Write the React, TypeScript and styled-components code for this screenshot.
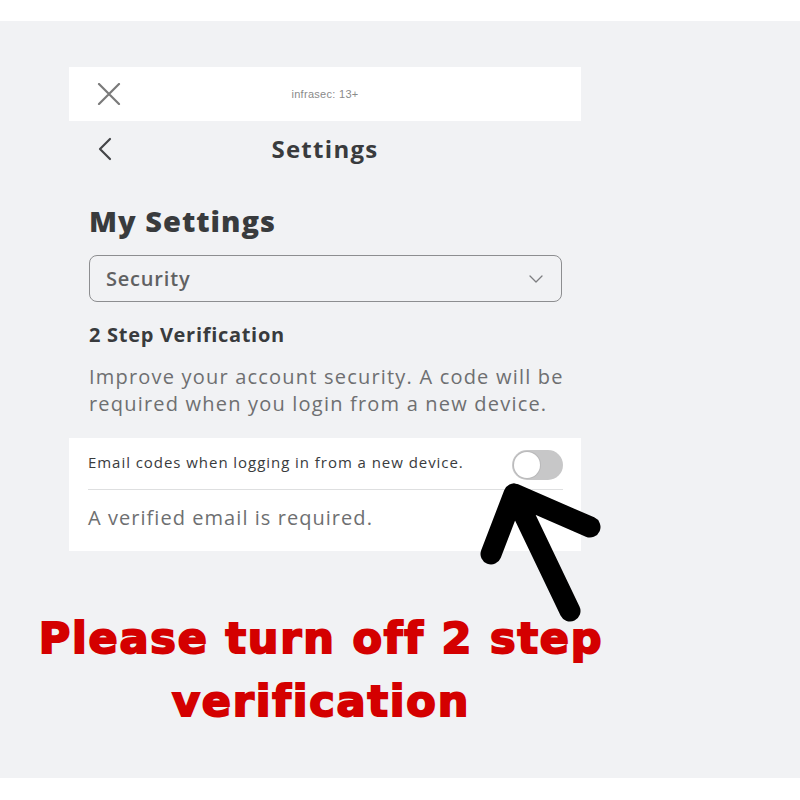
import React from "react";
import styled, { createGlobalStyle } from "styled-components";

const GlobalStyle = createGlobalStyle`
  html, body {
    margin: 0;
    padding: 0;
    background: #ffffff;
  }
  body {
    font-family: "Open Sans", "Liberation Sans", sans-serif;
  }
`;

const Page = styled.div({
  width: "800px",
  height: "800px",
  background: "#ffffff",
  paddingTop: "21px",
  boxSizing: "border-box",
  overflow: "hidden",
});

const Stage = styled.div({
  position: "relative",
  height: "757px",
  background: "#f1f2f4",
  paddingTop: "46px",
  boxSizing: "border-box",
});

const Panel = styled.div({
  marginLeft: "69px",
  width: "512px",
  display: "flex",
  flexDirection: "column",
});

const TopBar = styled.div({
  height: "54px",
  background: "#ffffff",
  display: "grid",
  gridTemplateColumns: "1fr auto 1fr",
  alignItems: "center",
  padding: "0 28px",
});

const Badge = styled.div({
  fontSize: "11px",
  color: "#8a8a8a",
  fontFamily: "'Liberation Sans Narrow', 'Liberation Sans', sans-serif",
  letterSpacing: "0.3px",
});

const Header = styled.div({
  height: "55px",
  display: "grid",
  gridTemplateColumns: "1fr auto 1fr",
  alignItems: "center",
  padding: "0 28px",
});

const HeaderTitle = styled.div({
  fontSize: "24px",
  fontWeight: 700,
  color: "#393b3d",
  lineHeight: "24px",
  letterSpacing: "1.3px",
});

const Body = styled.div({
  display: "flex",
  flexDirection: "column",
  padding: "0 19px 0 20px",
});

const PageTitle = styled.h1({
  margin: "30px 0 0 0",
  fontSize: "29px",
  lineHeight: "29px",
  fontWeight: 800,
  color: "#393b3d",
  letterSpacing: "1px",
});

const Select = styled.div({
  marginTop: "20px",
  height: "47px",
  border: "1.5px solid #8d8e90",
  borderRadius: "8px",
  boxSizing: "border-box",
  display: "flex",
  alignItems: "center",
  justifyContent: "space-between",
  padding: "0 18px 0 16px",
  fontSize: "20px",
  color: "#606162",
  fontWeight: 600,
  letterSpacing: "0.8px",
});

const SectionTitle = styled.h2({
  margin: "23px 0 0 0",
  fontSize: "20px",
  lineHeight: "20px",
  fontWeight: 700,
  color: "#393b3d",
  letterSpacing: "0.7px",
});

const Description = styled.p({
  margin: "18px 0 0 0",
  fontSize: "20px",
  lineHeight: "27px",
  color: "#6e6f71",
  letterSpacing: "1.2px",
  whiteSpace: "nowrap",
});

const Card = styled.div({
  marginTop: "21px",
  background: "#ffffff",
  padding: "0 18px 20px 19px",
  display: "flex",
  flexDirection: "column",
});

const SettingRow = styled.div({
  display: "flex",
  justifyContent: "space-between",
  alignItems: "flex-start",
  padding: "12px 0 9px 0",
  borderBottom: "1px solid #dedfe0",
});

const SettingLabel = styled.div({
  marginTop: "3px",
  fontSize: "15px",
  lineHeight: "18px",
  color: "#393b3d",
  letterSpacing: "0.95px",
});

const Toggle = styled.div<{ on?: boolean }>((p) => ({
  width: "51px",
  height: "30px",
  borderRadius: "15px",
  background: p.on ? "#00b06f" : "#c7c7c8",
  position: "relative",
  "&::after": {
    content: '""',
    position: "absolute",
    top: "2px",
    left: p.on ? "23px" : "2px",
    width: "26px",
    height: "26px",
    borderRadius: "50%",
    background: "#ffffff",
    boxShadow: "0 0 0 1px #b9b9ba",
  },
}));

const Note = styled.div({
  marginTop: "14px",
  fontSize: "20px",
  lineHeight: "27px",
  color: "#6e6f71",
  letterSpacing: "1.05px",
});

const Warning = styled.div({
  marginTop: "56px",
  marginLeft: "21px",
  width: "600px",
  textAlign: "center",
  fontFamily: "'DejaVu Sans', 'Liberation Sans', sans-serif",
  fontWeight: 700,
  fontSize: "43px",
  lineHeight: "63px",
  color: "#d40000",
  WebkitTextStroke: "2px #d40000",
  letterSpacing: "1.8px",
});

const ArrowLayer = styled.svg({
  position: "absolute",
  left: 0,
  top: 0,
  width: "800px",
  height: "757px",
  pointerEvents: "none",
});

const CloseIcon = () => (
  <svg width="24" height="22" viewBox="0 0 24 22">
    <path d="M2 1 L22 21 M22 1 L2 21" stroke="#7a7a7a" strokeWidth="2.2" strokeLinecap="round" fill="none" />
  </svg>
);

const BackIcon = () => (
  <svg width="16" height="24" viewBox="0 0 16 24">
    <path d="M13 2 L3 12 L13 22" stroke="#444548" strokeWidth="2.2" strokeLinecap="round" strokeLinejoin="round" fill="none" />
  </svg>
);

const ChevronDown = () => (
  <svg width="14" height="8" viewBox="0 0 14 8">
    <path d="M1 1 L7 7 L13 1" stroke="#7d7e80" strokeWidth="1.3" strokeLinecap="round" strokeLinejoin="round" fill="none" />
  </svg>
);

const App = () => {
  return (
    <>
      <GlobalStyle />
      <Page>
        <Stage>
          <Panel>
            <TopBar>
              <CloseIcon />
              <Badge>infrasec: 13+</Badge>
              <span />
            </TopBar>
            <Header>
              <BackIcon />
              <HeaderTitle>Settings</HeaderTitle>
              <span />
            </Header>
            <Body>
              <PageTitle>My Settings</PageTitle>
              <Select>
                <span>Security</span>
                <ChevronDown />
              </Select>
              <SectionTitle>2 Step Verification</SectionTitle>
              <Description>
                Improve your account security. A code will be
                <br />
                required when you login from a new device.
              </Description>
            </Body>
            <Card>
              <SettingRow>
                <SettingLabel>Email codes when logging in from a new device.</SettingLabel>
                <Toggle />
              </SettingRow>
              <Note>A verified email is required.</Note>
            </Card>
          </Panel>
          <Warning>
            Please turn off 2 step
            <br />
            verification
          </Warning>
          <ArrowLayer viewBox="0 0 800 757">
            <path
              d="M491 533 L514 473 L590 506 M514 473 L570 590"
              stroke="#000000"
              strokeWidth="21"
              strokeLinecap="round"
              strokeLinejoin="round"
              fill="none"
            />
          </ArrowLayer>
        </Stage>
      </Page>
    </>
  );
};

export default App;
